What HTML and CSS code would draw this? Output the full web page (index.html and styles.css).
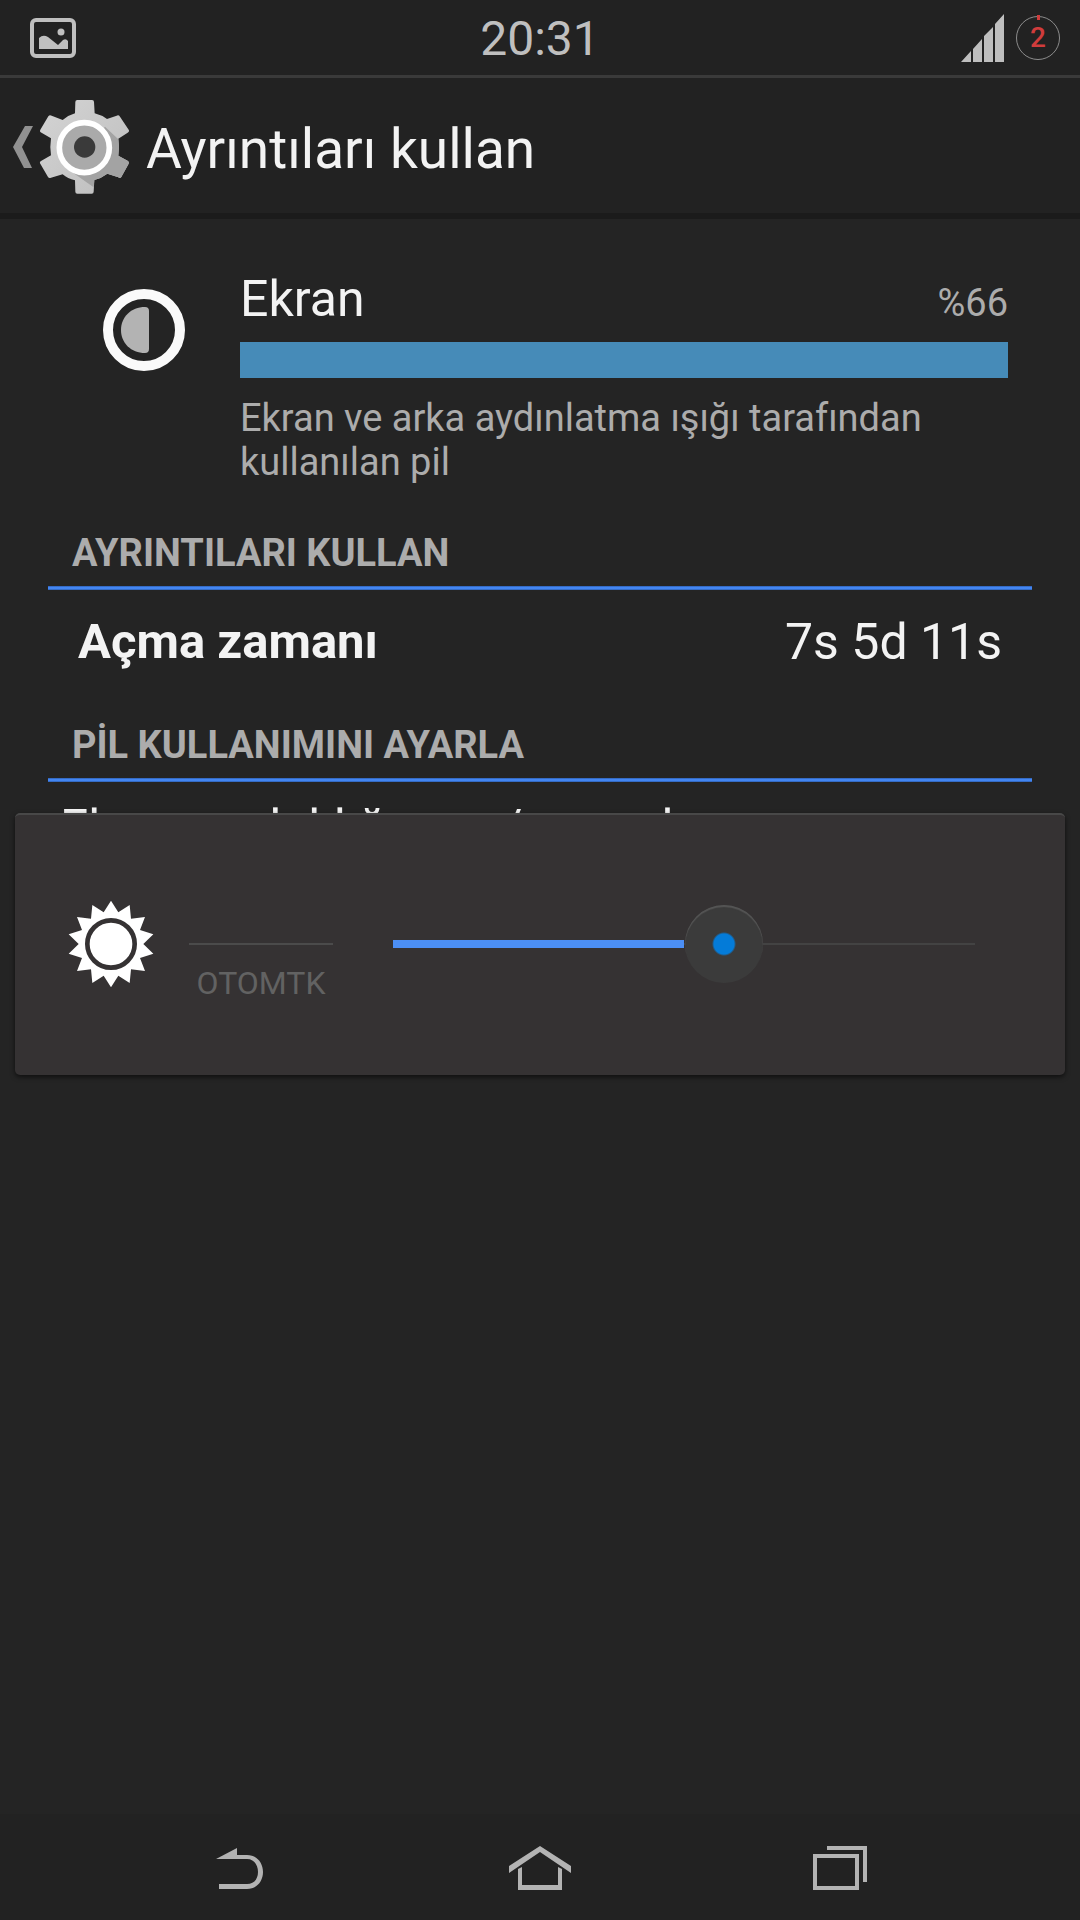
FILE: index.html
```html
<!DOCTYPE html>
<html lang="tr">
<head>
  <meta charset="UTF-8" />
  <meta name="viewport" content="width=device-width, initial-scale=1.0"/>
  <title>Ayrıntıları kullan</title>
  <link rel="stylesheet" href="styles.css">
</head>
<body>
  <div class="status-bar">
    <div class="status-left">
      <svg viewBox="0 0 46 40" width="46" height="40">
        <rect x="2" y="2" width="42" height="36" rx="4" fill="none" stroke="#bfbfbf" stroke-width="4"/>
        <path d="M9 31V20Q13 16 18 19L28 27L33 22Q36 20 38 23V31Z" fill="#bfbfbf"/>
        <circle cx="31" cy="14" r="3.5" fill="#bfbfbf"/>
      </svg>
    </div>
    <time class="clock">20:31</time>
    <div class="status-right">
      <svg viewBox="0 0 43 48" width="43" height="48" fill="#bfbfbf">
        <path d="M0 48L10 37V48ZM12 48V35L21 25V48ZM23 48V22L32 13V48ZM34 48V10L43 0V48Z"/>
      </svg>
      <span class="battery">2</span>
    </div>
  </div>

  <header class="app-bar">
    <a class="back" href="#" aria-label="Geri">
      <svg viewBox="0 0 20 42" width="20" height="42">
        <path d="M12 0H20L9 21L19 42H11L0 21Z" fill="#919191"/>
      </svg>
      <svg viewBox="117 27 273 288" width="91" height="96">
        <defs>
          <linearGradient id="gear" x1="0" y1="0" x2="1" y2="1">
            <stop offset="0" stop-color="#d4d4d4"/>
            <stop offset="1" stop-color="#bdbdbd"/>
          </linearGradient>
        </defs>
        <path d="M226 36Q226 30 232 30H276Q282 30 282 36L284 70Q304 75 321 87L350 77Q356 74 360 80L387 121Q388 126 383 128L355 146Q359 171 355 197L384 213Q388 216 386 221L364 261Q360 266 355 262L322 251Q305 264 283 270L281 305Q281 311 275 311H232Q226 311 226 305L225 271Q203 266 188 253L153 263Q147 266 144 261L120 220Q118 215 123 213L153 196Q149 171 153 145L122 127Q118 124 121 119L145 79Q149 73 155 77L188 90Q204 76 225 70Z" fill="url(#gear)"/>
        <path d="M315 110L355 148Q359 171 355 197L384 213Q388 216 386 221L364 261Q360 266 355 262L322 251Q305 264 283 270L281 292L204 238Z" fill="#a3a3a3"/>
        <circle cx="253" cy="173" r="75" fill="#aaa" stroke="#fff" stroke-width="17"/>
        <circle cx="254" cy="171" r="32" fill="#3a3a3a"/>
      </svg>
    </a>
    <h1>Ayrıntıları kullan</h1>
  </header>

  <main>
    <section class="summary">
      <svg class="summary-icon" viewBox="0 0 82 82" width="82" height="82">
        <circle cx="41" cy="41" r="36" fill="none" stroke="#fafafa" stroke-width="10"/>
        <path d="M42 18C28 18 18 28 18 41S28 64 42 64Q46 64 46 60V22Q46 18 42 18Z" fill="#b3b3b3"/>
      </svg>
      <div class="summary-body">
        <div class="summary-head">
          <span class="name">Ekran</span>
          <span class="percent">%66</span>
        </div>
        <progress value="100" max="100" aria-label="Ekran"></progress>
        <p>Ekran ve arka aydınlatma ışığı tarafından kullanılan pil</p>
      </div>
    </section>

    <section class="group">
      <h2>AYRINTILARI KULLAN</h2>
      <dl class="row">
        <dt>Açma zamanı</dt>
        <dd>7s 5d 11s</dd>
      </dl>
    </section>

    <section class="group">
      <h2>PİL KULLANIMINI AYARLA</h2>
      <p class="note">Ekran parlaklığını ve/veya ekran zaman aşımını ayarla</p>
    </section>
  </main>

  <!-- Brightness panel -->
  <div class="brightness" role="dialog" aria-label="Parlaklık">
    <svg viewBox="84 91 258 264" width="86" height="88">
      <path d="M213 93L235 128L269 106L273 147L315 142L300 181L340 194L310 223L340 252L300 265L315 304L273 299L269 340L235 318L213 353L191 318L157 340L153 299L111 304L126 265L86 252L116 223L86 194L126 181L111 142L153 147L157 106L191 128Z" fill="#fff"/>
      <circle cx="213" cy="223" r="71" fill="none" stroke="#353233" stroke-width="14"/>
    </svg>
    <button type="button" class="auto" aria-pressed="false">OTOMTK</button>
    <input type="range" class="level" min="0" max="100" value="58" aria-label="Parlaklık">
  </div>

  <nav class="nav-bar">
    <button type="button" aria-label="Geri">
      <svg viewBox="0 0 48 44" width="48" height="44">
        <path d="M0 13L21 2V9H31C41 9 47 17 47 26S41 43 31 43H3V38H31C38 38 42 33 42 26S38 13 31 13Z" fill="#b3b3b3"/>
      </svg>
    </button>
    <button type="button" aria-label="Ana ekran">
      <svg viewBox="0 0 64 46" width="64" height="46">
        <path d="M1 21L32 1L63 21V28L32 7L1 28ZM10 24L14 22V40H50V22L54 24V45H10Z" fill="#b3b3b3"/>
      </svg>
    </button>
    <button type="button" aria-label="Son uygulamalar">
      <svg viewBox="0 0 54 44" width="54" height="44" fill="none" stroke="#b3b3b3" stroke-width="4">
        <rect x="2" y="10" width="42" height="32"/>
        <path d="M14 2H52V36"/>
      </svg>
    </button>
  </nav>
</body>
</html>
```
FILE: styles.css
```css
* {
  box-sizing: border-box;
}

body {
  margin: 0;
  min-height: 100vh;
  display: flex;
  flex-direction: column;
  position: relative;
  font-family: Roboto, sans-serif;
  background-color: #242424;
  color: #f3f3f3;
}

h1, h2, p, dl, dd {
  margin: 0;
}

svg {
  display: block;
  flex-shrink: 0;
}

button {
  padding: 0;
  border: none;
  background: none;
  font-family: inherit;
  cursor: pointer;
}

.status-bar {
  display: grid;
  grid-template-columns: 1fr auto 1fr;
  align-items: center;
  height: 78px;
  padding: 0 20px;
  background-color: #222;
  border-bottom: 3px solid #3a3a3a;
}

.status-left {
  padding-left: 10px;
}

.clock {
  padding-top: 2px;
  font-size: 48px;
  color: #bfbfbf;
}

.status-right {
  display: flex;
  align-items: center;
  justify-content: flex-end;
  gap: 12px;
}

.battery {
  position: relative;
  width: 44px;
  height: 44px;
  border: 1px solid #8c8c8c;
  border-radius: 50%;
  font-size: 28px;
  font-weight: 500;
  line-height: 42px;
  text-align: center;
  color: #d03c3c;
}

.battery::before {
  content: "";
  position: absolute;
  top: -2px;
  left: 20px;
  width: 3px;
  height: 5px;
  background-color: #d03c3c;
}

.app-bar {
  display: flex;
  align-items: center;
  gap: 16px;
  height: 141px;
  padding: 2px 13px 0;
  background-color: #222;
  border-bottom: 6px solid #1b1b1b;
}

.back {
  display: flex;
  align-items: center;
  gap: 6px;
}

h1 {
  padding-top: 4px;
  font-size: 55px;
  font-weight: 400;
}

main {
  flex: 1;
  padding: 52px 48px 0;
}

.summary {
  display: flex;
  gap: 55px;
  padding: 0 24px 0 55px;
}

.summary-icon {
  margin-top: 18px;
}

.summary-body {
  flex: 1;
}

.summary-head {
  display: flex;
  justify-content: space-between;
  align-items: baseline;
  line-height: 56px;
}

.name {
  font-size: 50px;
}

.percent {
  font-size: 38px;
  color: #acacac;
}

progress {
  display: block;
  appearance: none;
  width: 100%;
  height: 36px;
  margin: 11px 0 18px;
  border: none;
}

progress::-webkit-progress-bar {
  background-color: #333;
}

progress::-webkit-progress-value {
  background-color: #468bb8;
}

.summary p {
  font-size: 38px;
  line-height: 44px;
  color: #acacac;
}

.group {
  margin-top: 24px;
}

h2 {
  padding: 22px 24px 14px;
  font-size: 38px;
  line-height: 46px;
  font-weight: 700;
  color: #acacac;
  background: linear-gradient(#2f5fae, #4488f6 40%, #4488f6 60%, #2f5fae) bottom / 100% 4px no-repeat;
}

.row {
  display: flex;
  justify-content: space-between;
  padding: 24px 30px 6px;
  font-size: 50px;
  line-height: 56px;
}

.row dt {
  font-size: 49px;
  font-weight: 700;
}

.note {
  padding: 18px 12px 0;
  font-size: 50px;
  line-height: 56px;
}

.brightness {
  position: absolute;
  top: 813px;
  left: 15px;
  right: 15px;
  display: flex;
  align-items: center;
  height: 262px;
  padding: 0 90px 2px 53px;
  background-color: #353233;
  border-top: 2px solid #484848;
  border-radius: 5px;
  box-shadow: 0 2px 5px rgba(0, 0, 0, 0.6);
}

.auto {
  width: 144px;
  height: 116px;
  margin: 0 60px 0 35px;
  padding-top: 78px;
  font-size: 32px;
  line-height: 38px;
  color: #626262;
  background: linear-gradient(#4b4b4b, #4b4b4b) center / 100% 2px no-repeat;
}

.level {
  appearance: none;
  flex: 1;
  min-width: 0;
  height: 80px;
  margin: 0;
  background:
    linear-gradient(#4c8ff5, #4c8ff5) left center / 50% 8px no-repeat,
    linear-gradient(#434343, #434343) center / 100% 2px no-repeat;
}

.level::-webkit-slider-thumb {
  appearance: none;
  width: 78px;
  height: 78px;
  border-radius: 50%;
  background: radial-gradient(circle, #047bd8 10px, #3b3b3b 12px);
  box-shadow: inset 0 2px 1px #555;
}

.nav-bar {
  display: flex;
  justify-content: center;
  height: 106px;
  padding: 2px 90px 0;
  background-color: #222;
}

.nav-bar button {
  flex: 1;
  display: flex;
  align-items: center;
  justify-content: center;
}
```
